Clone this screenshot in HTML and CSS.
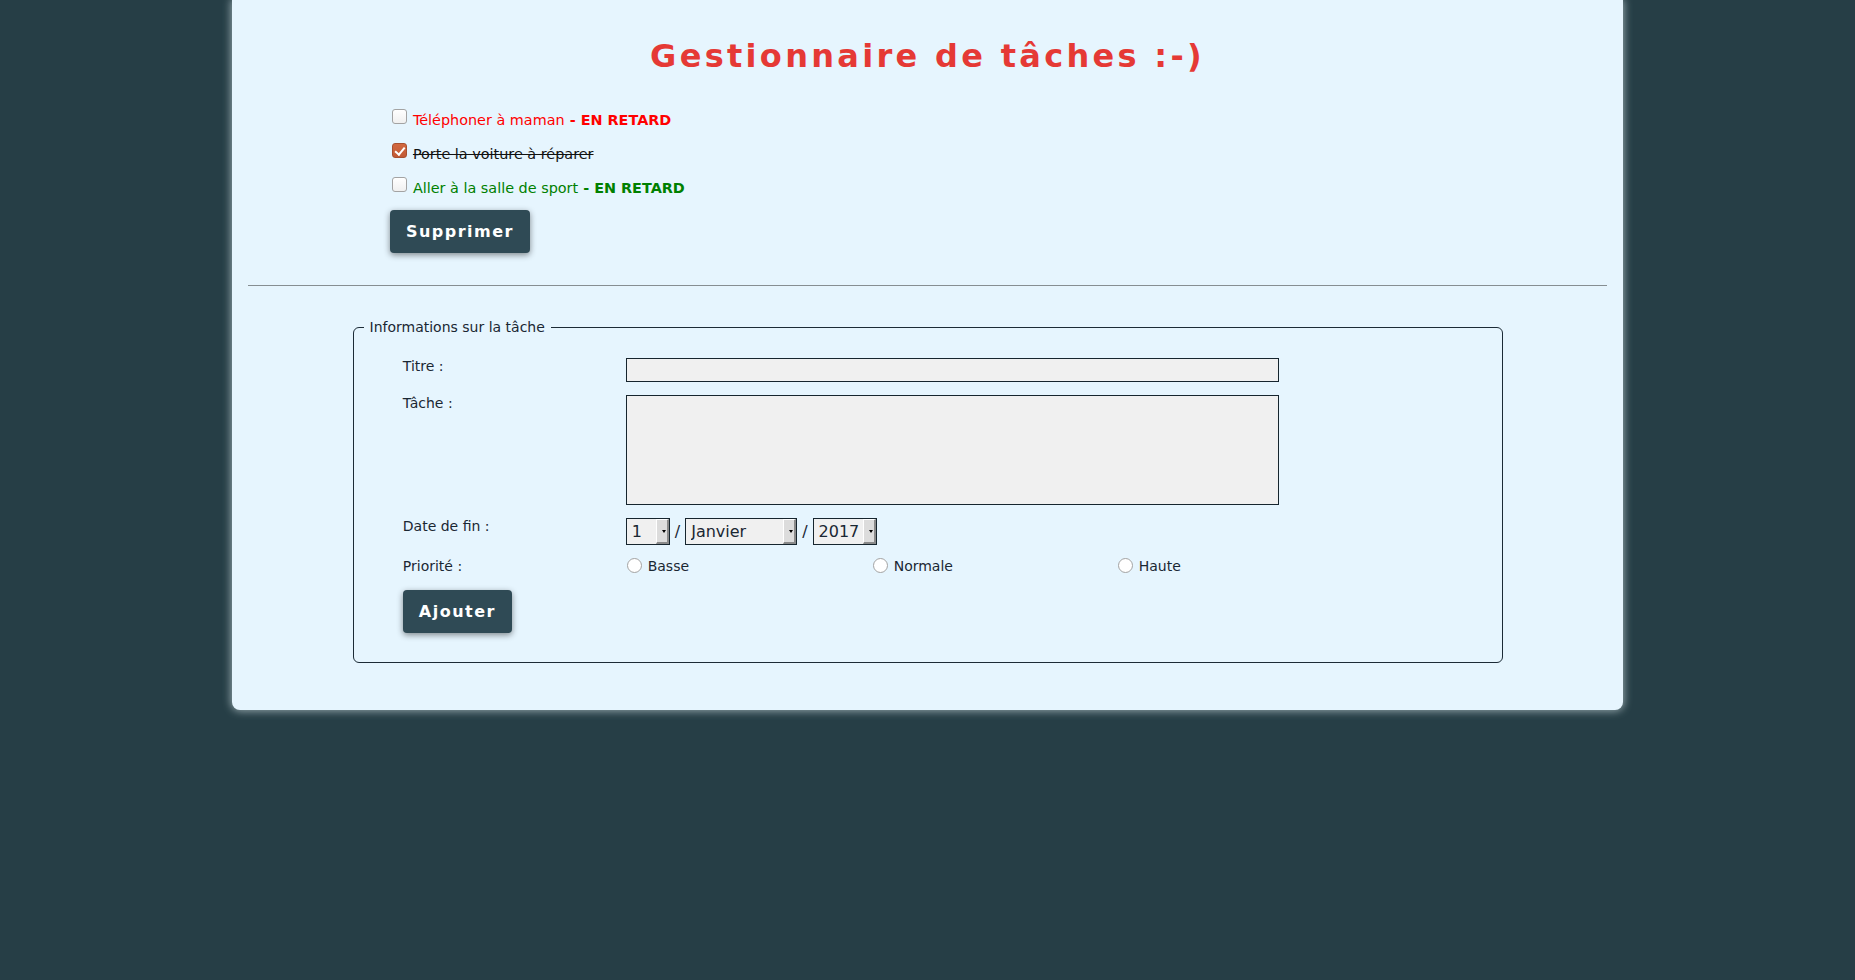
FILE: index.html
```html
<!DOCTYPE html>
<html lang="fr">
<head>
<meta charset="utf-8">
<title>Gestionnaire de tâches</title>
<link rel="stylesheet" href="styles.css">
</head>
<body>
<div class="app">
  <h1 class="title">Gestionnaire de tâches :-)</h1>
  <form class="tasks">
    <div class="task late-red">
      <input type="checkbox" class="chk">
      <span class="task-text">Téléphoner à maman<strong> - EN RETARD</strong></span>
    </div>
    <div class="task done">
      <input type="checkbox" class="chk" checked>
      <span class="task-text">Porte la voiture à réparer</span>
    </div>
    <div class="task late-green">
      <input type="checkbox" class="chk">
      <span class="task-text">Aller à la salle de sport<strong> - EN RETARD</strong></span>
    </div>
    <button type="button" class="btn btn-del">Supprimer</button>
  </form>
  <hr class="sep">
  <form class="new-task">
    <fieldset class="fs">
      <legend class="legend">Informations sur la tâche</legend>
      <div class="grid">
        <label class="lbl" for="titre">Titre :</label>
        <div class="ctl"><input type="text" id="titre" class="field txt"></div>

        <label class="lbl" for="tache">Tâche :</label>
        <div class="ctl"><textarea id="tache" class="field area"></textarea></div>

        <label class="lbl">Date de fin :</label>
        <div class="ctl date">
          <span class="sel"><select class="sel-day"><option>1</option><option>31</option></select></span>
          <span class="slash">/</span>
          <span class="sel"><select class="sel-month"><option>Janvier</option><option>Septembre</option></select></span>
          <span class="slash">/</span>
          <span class="sel"><select class="sel-year"><option>2017</option></select></span>
        </div>

        <label class="lbl">Priorité :</label>
        <div class="ctl prio">
          <label class="opt"><input type="radio" name="prio" class="rad"><span>Basse</span></label>
          <label class="opt"><input type="radio" name="prio" class="rad"><span>Normale</span></label>
          <label class="opt"><input type="radio" name="prio" class="rad"><span>Haute</span></label>
        </div>
      </div>
      <button type="button" class="btn btn-add">Ajouter</button>
    </fieldset>
  </form>
</div>
</body>
</html>
```
FILE: styles.css
```css
* { box-sizing: border-box; }
html, body { margin: 0; padding: 0; }
body {
  background: #263e46;
  font-family: "DejaVu Sans", sans-serif;
  font-size: 14px;
  color: #1a2733;
  min-height: 100vh;
}
.app {
  width: 75%;
  margin: 0 auto;
  background: #e6f5fe;
  padding: 16px;
  border-radius: 0 0 8px 8px;
  box-shadow: 0 0 8px 1px rgba(190, 205, 210, 0.75);
}
.title {
  margin: 21.44px 0;
  font-size: 32px;
  font-weight: bold;
  letter-spacing: 3.3px;
  text-align: center;
  color: #e53935;
  line-height: normal;
}
.tasks {
  margin: 0;
  padding: 12px 0 0 142px;
}
.task {
  display: flex;
  align-items: flex-start;
  height: 20px;
}
.task + .task { margin-top: 14px; }
.task-text {
  margin-top: 3.5px;
  font-size: 14.4px;
  line-height: 17px;
}
.late-red .task-text { color: #ff0000; }
.late-green .task-text { color: #008000; }
.done .task-text { color: #111; text-decoration: line-through; }

.chk {
  -webkit-appearance: none;
  appearance: none;
  position: relative;
  flex: none;
  width: 15px;
  height: 15px;
  margin: 0 6px 0 2px;
  border: 1px solid #a3a3a3;
  border-radius: 3px;
  background: linear-gradient(#ffffff, #f0f0f0);
}
.chk:checked {
  background: linear-gradient(#d2683f, #c25a36);
  border-color: #a84f2f;
}
.chk:checked::after {
  content: "";
  position: absolute;
  left: 4.5px;
  top: 1px;
  width: 3.5px;
  height: 8px;
  border: solid #fff;
  border-width: 0 2px 2px 0;
  transform: rotate(40deg);
}

.btn {
  display: block;
  background: #2f4a55;
  color: #fff;
  border: 0;
  border-radius: 4px;
  font: bold 16px "DejaVu Sans", sans-serif;
  letter-spacing: 1.5px;
  padding: 12px 16px;
  line-height: normal;
  box-shadow: 0 2px 6px rgba(0, 0, 0, 0.45);
}
.btn-del { margin-top: 13px; }
.btn-add { margin: 16.4px 0 0 39.3px; }

.sep {
  margin: 32.5px 0 0;
  border: 0;
  border-top: 1px solid #868e92;
  height: 0;
}
.new-task { margin: 0; }
.fs {
  width: 1150px;
  min-width: 0;
  margin: 33px auto 31.5px;
  border: 1px solid #1c2b36;
  border-radius: 6px;
  padding: 22.7px 10px 28.5px;
}
.legend {
  padding: 0 6px;
  font-size: 14px;
  line-height: normal;
}
.grid {
  display: grid;
  grid-template-columns: 223px auto;
  row-gap: 13px;
  padding-left: 39.3px;
  align-items: start;
}
.lbl { line-height: normal; }
.field {
  display: block;
  width: 653px;
  margin: 0;
  background: #f0f0f0;
  border: 1px solid #16252e;
  border-radius: 0;
  font: 14px "DejaVu Sans", sans-serif;
  color: #1a2733;
  padding: 2px 4px;
}
.txt { height: 24.4px; }
.area { height: 110px; resize: none; }

.date {
  display: flex;
  align-items: center;
  font-size: 16px;
  height: 26.4px;
}
.slash { padding: 0 5px; }
.sel {
  position: relative;
  display: block;
}
.sel select {
  display: block;
  -webkit-appearance: none;
  appearance: none;
  height: 26.4px;
  margin: 0;
  padding: 0 0 0 5px;
  border: 1px solid #16252e;
  border-radius: 0;
  background: #f0f0f0;
  font: 16px "DejaVu Sans", sans-serif;
  color: #1a2733;
}
.sel-day { width: 44px; }
.sel-month { width: 112px; }
.sel-year { width: 64px; }
.sel::before {
  content: "";
  position: absolute;
  top: 1px;
  right: 1px;
  bottom: 1px;
  width: 10px;
  background: #dcdcdc;
  border-top: 1px solid #fff;
  border-left: 1px solid #fff;
  border-right: 2px solid #8a8a8a;
  border-bottom: 2px solid #8a8a8a;
  pointer-events: none;
}
.sel::after {
  content: "";
  position: absolute;
  right: 4px;
  top: 50%;
  margin-top: -1.5px;
  border-left: 2.5px solid transparent;
  border-right: 2.5px solid transparent;
  border-top: 3px solid #000;
  pointer-events: none;
}

.prio {
  display: grid;
  grid-template-columns: 246px 245px 245px;
}
.opt {
  display: flex;
  align-items: flex-start;
  line-height: normal;
}
.rad {
  -webkit-appearance: none;
  appearance: none;
  flex: none;
  width: 15.4px;
  height: 15.4px;
  margin: 0 5.5px 0 1px;
  border: 1px solid #a3a3a3;
  border-radius: 50%;
  background: #fff;
}
```
